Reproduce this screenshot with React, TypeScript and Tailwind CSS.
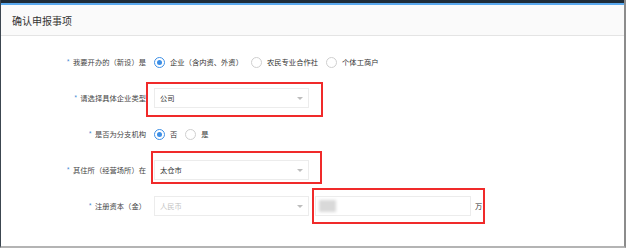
import React from 'react';

const font = { fontFamily: '"Noto Sans CJK SC", "Noto Sans", sans-serif' };

function Radio({ checked, label }: { checked?: boolean; label: string }) {
  return (
    <div className="flex items-center">
      <span
        className={
          checked
            ? 'w-[11px] h-[11px] rounded-full border border-[#3d8fe6] bg-white flex items-center justify-center'
            : 'w-[11px] h-[11px] rounded-full border border-[#cfcfcf] bg-white'
        }
      >
        {checked && <span className="w-[5px] h-[5px] rounded-full bg-[#3d8fe6]" />}
      </span>
      <span className="ml-[5px] text-[#333]">{label}</span>
    </div>
  );
}

function Select({ value, placeholder }: { value?: string; placeholder?: string }) {
  return (
    <div className="w-[155px] h-[20px] border border-[#ececec] bg-white flex items-center justify-between pl-[5px] pr-[5px]">
      {value ? (
        <span className="text-[#333]">{value}</span>
      ) : (
        <span className="text-[#c4c4c4]">{placeholder}</span>
      )}
      <span className="w-0 h-0 border-l-[3px] border-r-[3px] border-t-[3px] border-l-transparent border-r-transparent border-t-[#bdbdbd]" />
    </div>
  );
}

function Label({ text }: { text: string }) {
  return (
    <div className="w-[145px] text-right text-[#444] shrink-0">
      <span className="text-[#4f8fd6] mr-[3px]">*</span>
      {text}
    </div>
  );
}

export default function App() {
  return (
    <div
      className="w-[626px] h-[248px] relative overflow-hidden bg-white flex flex-col border-l border-l-[#3c4650] border-r-2 border-r-[#8c8c8c] border-b-2 border-b-[#b4b4b4]"
      style={font}
    >
      {/* window top */}
      <div className="h-[3px] bg-[#1f2c38]" />
      <div className="h-[2px] bg-[#5aa9ee]" />

      {/* header */}
      <div className="h-[31px] bg-[#fafafa] border-b border-[#e4e4e4] flex items-center pl-[11px] text-[10px] text-[#333]">
        确认申报事项
      </div>

      {/* form */}
      <div className="pt-[8px] text-[7.3px]">
        <div className="h-[36px] flex items-center">
          <Label text="我要开办的（新设）是" />
          <div className="ml-[8px] flex items-center gap-[8px]">
            <Radio checked label="企业（含内资、外资）" />
            <Radio label="农民专业合作社" />
            <Radio label="个体工商户" />
          </div>
        </div>

        <div className="h-[36px] flex items-center">
          <Label text="请选择具体企业类型" />
          <div className="ml-[8px]">
            <Select value="公司" />
          </div>
        </div>

        <div className="h-[36px] flex items-center">
          <Label text="是否为分支机构" />
          <div className="ml-[8px] flex items-center gap-[8px]">
            <Radio checked label="否" />
            <Radio label="是" />
          </div>
        </div>

        <div className="h-[36px] flex items-center">
          <Label text="其住所（经营场所）在" />
          <div className="ml-[8px]">
            <Select value="太仓市" />
          </div>
        </div>

        <div className="h-[36px] flex items-center">
          <Label text="注册资本（金）" />
          <div className="ml-[8px] flex items-center">
            <Select placeholder="人民币" />
            <div className="ml-[6px] w-[156px] h-[20px] border border-[#ececec] bg-white flex items-center pl-[3px]">
              <div className="w-[17px] h-[12px] bg-[#d9d9d9] blur-[1.5px]" />
            </div>
            <span className="ml-[4px] text-[#333]">万</span>
          </div>
        </div>
      </div>

      {/* annotation boxes */}
      <div className="absolute left-[145px] top-[82px] w-[177px] h-[35px] border-2 border-[#f02a2a]" />
      <div className="absolute left-[150px] top-[151px] w-[171px] h-[33px] border-2 border-[#f02a2a]" />
      <div className="absolute left-[311px] top-[188px] w-[173px] h-[36px] border-2 border-[#f02a2a]" />
    </div>
  );
}
